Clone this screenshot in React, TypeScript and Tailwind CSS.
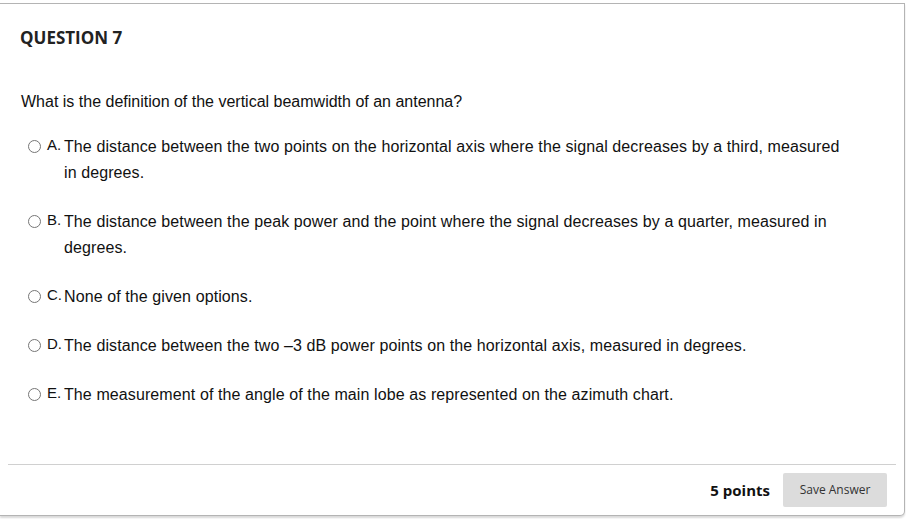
const options = [
  {
    letter: 'A.',
    text: 'The distance between the two points on the horizontal axis where the signal decreases by a third, measured in degrees.',
  },
  {
    letter: 'B.',
    text: 'The distance between the peak power and the point where the signal decreases by a quarter, measured in degrees.',
  },
  { letter: 'C.', text: 'None of the given options.' },
  {
    letter: 'D.',
    text: 'The distance between the two \u20133 dB power points on the horizontal axis, measured in degrees.',
  },
  { letter: 'E.', text: 'The measurement of the angle of the main lobe as represented on the azimuth chart.' },
];

export default function App() {
  return (
    <div className="w-[906px] h-[519px] bg-white overflow-hidden">
      <div className="mt-[3px] w-[905px] h-[513px] bg-white border-t border-r border-b border-[#b4b4b4] rounded-br-[5px] shadow-[0_2px_2px_rgba(0,0,0,0.15)] flex flex-col">
        {/* Header */}
        <div className="pl-[20px] pt-[22px] h-[52px]">
          <h2 className="text-[17px] leading-[24px] font-bold text-[#222]" style={{ fontFamily: '"Open Sans", sans-serif' }}>
            QUESTION 7
          </h2>
        </div>

        <div className="flex-1 pl-[21px] pr-[40px]" style={{ fontFamily: '"Liberation Sans", Arial, sans-serif' }}>
          <p className="mt-[34px] text-[16px] leading-[24px] text-[#111]">
            What is the definition of the vertical beamwidth of an antenna?
          </p>

          <div className="mt-[20px] flex flex-col gap-[23px]">
            {options.map((o) => (
              <div key={o.letter} className="flex items-start">
                <span className="mt-[6px] ml-[7px] w-[13px] h-[13px] rounded-full border border-[#767676] shrink-0" />
                <span className="ml-[6px] w-[17px] shrink-0 text-[15px] leading-[22px] text-[#111]">{o.letter}</span>
                <span className="w-[780px] text-[16px] leading-[26px] tracking-[0.1px] text-[#111]">{o.text}</span>
              </div>
            ))}
          </div>
        </div>

        {/* Footer */}
        <div className="mx-[8px] border-t border-[#d0d0d0] h-[51px] flex items-center justify-end pr-[9px]" style={{ fontFamily: '"Open Sans", sans-serif' }}>
          <span className="text-[15px] font-bold text-[#111] mr-[13px]">5 points</span>
          <button className="w-[104px] h-[34px] bg-[#dcdcdc] rounded-[2px] text-[12px] text-[#333]">Save Answer</button>
        </div>
      </div>
    </div>
  );
}
